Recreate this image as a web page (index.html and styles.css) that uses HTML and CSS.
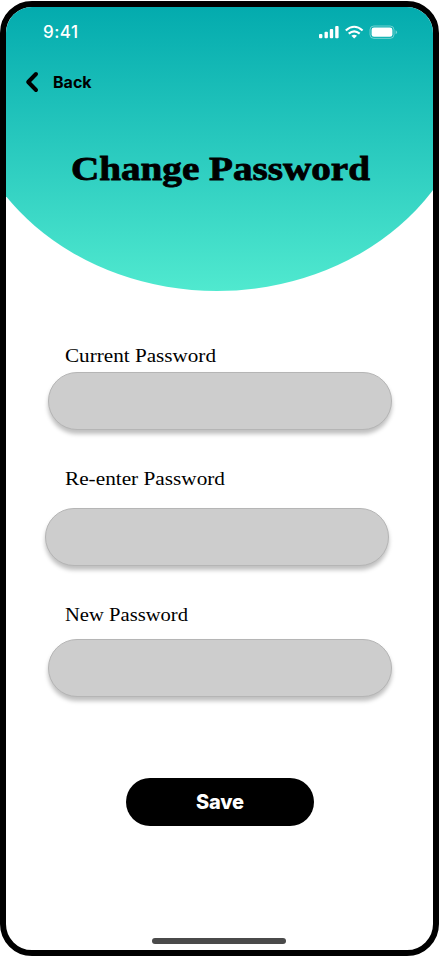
FILE: index.html
```html
<!DOCTYPE html>
<html lang="en">
<head>
<meta charset="utf-8">
<meta name="viewport" content="width=device-width, initial-scale=1">
<title>Change Password</title>
<link rel="stylesheet" href="styles.css">
</head>
<body>
<main class="phone">
  <header class="hero">
    <div class="status">
      <span class="time">9:41</span>
      <svg class="status-icons" width="80" height="16" viewBox="0 0 80 16" fill="#fff">
        <rect x="1" y="9" width="3.4" height="4.2" rx="1"/>
        <rect x="6.5" y="6.7" width="3.4" height="6.5" rx="1"/>
        <rect x="11.8" y="4" width="3.4" height="9.2" rx="1"/>
        <rect x="17.2" y="1" width="3.4" height="12.2" rx="1"/>
        <g fill="none" stroke="#fff" stroke-width="2.1">
          <path d="M27.8 5.5Q36.2-2 44.6 5.5"/>
          <path d="M30.7 8.6Q36.2 4 41.7 8.6"/>
        </g>
        <path d="M33.4 10.8Q36.2 8.6 39 10.8L36.2 13.5Z"/>
        <rect x="52" y="1" width="24" height="12.4" rx="3.8" fill="none" stroke="#fff" stroke-opacity=".4"/>
        <rect x="53.6" y="2.6" width="20.8" height="9.2" rx="2.4"/>
        <path d="M77.6 5.2Q79 5.8 79 7.2T77.6 9.2Z" opacity=".45"/>
      </svg>
    </div>
    <a class="back">
      <svg width="14" height="22" viewBox="0 0 14 22" fill="none" stroke="#000" stroke-width="4" stroke-linecap="round" stroke-linejoin="round"><path d="M11 3L3.2 11L11 19"/></svg>
      <span>Back</span>
    </a>
    <h1 class="title">
      <svg width="310" height="50"><text x="4" y="35" textLength="299" lengthAdjust="spacingAndGlyphs">Change Password</text></svg>
    </h1>
  </header>
  <form class="form">
    <div class="field current">
      <label for="current"><svg width="160" height="26"><text x="0" y="19" textLength="151" lengthAdjust="spacingAndGlyphs">Current Password</text></svg></label>
      <input id="current" type="password">
    </div>
    <div class="field again">
      <label for="again"><svg width="170" height="26"><text x="0" y="19" textLength="160" lengthAdjust="spacingAndGlyphs">Re-enter Password</text></svg></label>
      <input id="again" type="password">
    </div>
    <div class="field new">
      <label for="new"><svg width="140" height="26"><text x="0" y="19" textLength="123" lengthAdjust="spacingAndGlyphs">New Password</text></svg></label>
      <input id="new" type="password">
    </div>
    <button class="save" type="button">Save</button>
  </form>
  <div class="home-bar"></div>
</main>
</body>
</html>
```
FILE: styles.css
```css
* { box-sizing: border-box; }
body { margin: 0; background: #fff; overflow: hidden; }
svg { display: block; }
.phone {
  display: flex;
  flex-direction: column;
  width: 439px;
  height: 955px;
  margin-top: 1px;
  border: 6px solid #000;
  border-radius: 32px;
  background: #fff;
  overflow: hidden;
}
.hero {
  flex: none;
  height: 284px;
  background: linear-gradient(#03abae, #50e9cf);
  clip-path: ellipse(258px 223px at 211px 61px);
}
.status {
  display: flex;
  justify-content: space-between;
  align-items: flex-start;
  padding: 14px 35px 0 37px;
  height: 60px;
}
.time {
  font: 500 17px/22px Inter, sans-serif;
  letter-spacing: .5px;
  color: #fff;
}
.status-icons { margin-top: 4px; }
.back {
  display: flex;
  align-items: center;
  gap: 14px;
  width: 100px;
  height: 30px;
  padding-left: 19px;
  font: 700 16px/30px Inter, sans-serif;
}
.title { margin: 48px 0 0 61px; font-size: 33px; line-height: 1; }
.title text {
  font: 700 33px "Liberation Serif", serif;
  stroke: #000;
  stroke-width: .8px;
}
.form { display: flex; flex-direction: column; margin-top: -2px; padding-left: 42px; }
.field label { display: block; width: 180px; margin-left: 17px; height: 29px; }
.field label text { font: 19px "Liberation Serif", serif; }
.field input {
  display: block;
  width: 344px;
  height: 58px;
  padding: 0 24px;
  border: 1px solid #b5b5b5;
  border-radius: 29px;
  background: #cdcdcd;
  box-shadow: 0 4px 4px rgba(0, 0, 0, .25);
  outline: 0;
}
.current { margin-top: 54px; height: 123px; }
.again { height: 136px; }
.again label { height: 42px; }
.again input { margin-left: -3px; }
.new { height: 176px; }
.new label { height: 37px; }
.save {
  width: 188px;
  height: 48px;
  margin-left: 78px;
  padding: 0;
  border: 0;
  border-radius: 24px;
  background: #000;
  color: #fff;
  font: 800 20px/48px Inter, sans-serif;
  letter-spacing: -.2px;
}
.home-bar {
  width: 134px;
  height: 6px;
  margin: auto 0 6px 146px;
  border-radius: 3px;
  background: #4a4a4a;
}
```
